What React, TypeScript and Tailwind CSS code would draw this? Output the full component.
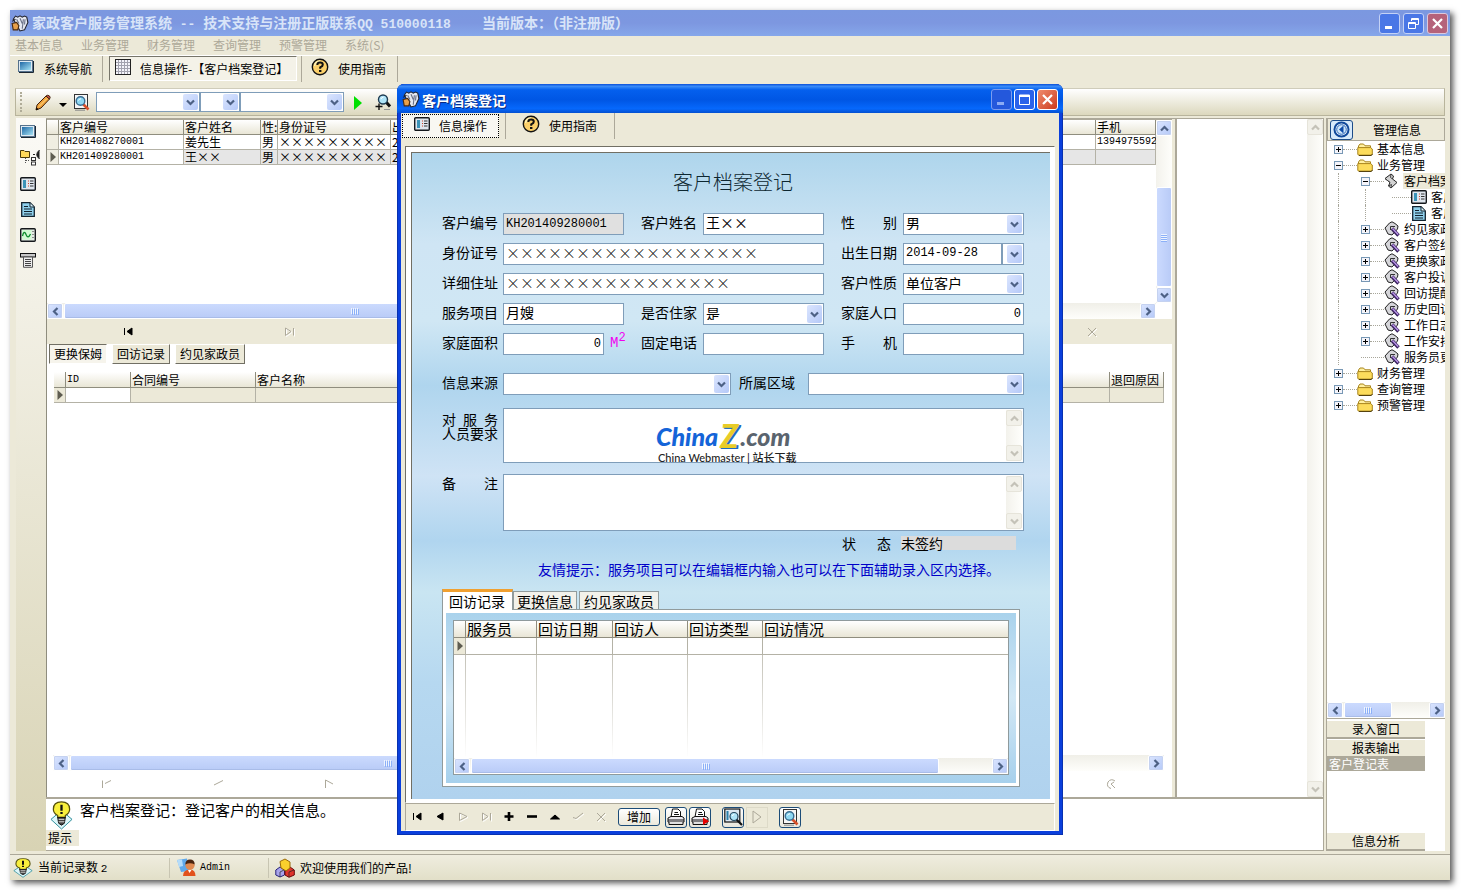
import React from 'react';

const mono = "font-['Liberation_Mono','Noto_Sans_CJK_SC',monospace]";

/* ---------- icons ---------- */

const Chevron = ({ dir, muted }: { dir: 'up' | 'down' | 'left' | 'right'; muted?: boolean }) => {
  const d = {
    up: 'M1 6.5 L4.5 3 L8 6.5',
    down: 'M1 2.5 L4.5 6 L8 2.5',
    left: 'M6.5 1 L3 4.5 L6.5 8',
    right: 'M2.5 1 L6 4.5 L2.5 8',
  }[dir];
  return (
    <svg width="9" height="9" viewBox="0 0 9 9" fill="none" stroke={muted ? '#c4c2b8' : '#4d6185'} strokeWidth="2.2">
      <path d={d} />
    </svg>
  );
};

const AppIcon = () => (
  <svg width="18" height="17" viewBox="0 0 16 16" className="shrink-0" preserveAspectRatio="none">
    <path d="M2 4 L4 1 L6 2 L8 0.8 L10 2 L12 1 L14 2 L15 7 L12 14 L8 15 L5 9 Z" fill="#e6e9f2" stroke="#23242e" />
    <path d="M5 4 L7 8 M8 3 L10 8 M11 4 L10 13 M12.5 4 L12 9" stroke="#6b7288" />
    <path d="M1 8 L5 7 L7 10 L6 14 L2 14 Z" fill="#e8a04a" stroke="#4a2a10" />
    <path d="M1 6 L4 4" stroke="#23242e" />
  </svg>
);

const ScreenIcon = () => (
  <svg width="16" height="13" viewBox="0 0 16 13" className="shrink-0">
    <defs>
      <linearGradient id="scr" x1="0" y1="0" x2="1" y2="1">
        <stop offset="0" stopColor="#2069a6" />
        <stop offset="1" stopColor="#a4e2f4" />
      </linearGradient>
    </defs>
    <rect x="0.5" y="0.5" width="14" height="11" fill="#dfeaf2" stroke="#56728c" />
    <rect x="2" y="2" width="11" height="8" fill="url(#scr)" />
    <path d="M15.5 1 V12.5 H1" stroke="#1a2632" fill="none" />
  </svg>
);

const GridIcon = () => (
  <svg width="16" height="16" viewBox="0 0 16 16" className="shrink-0">
    <rect x="0.5" y="0.5" width="15" height="15" fill="#f4f4fa" stroke="#222" />
    <path d="M3.5 1V15M6.5 1V15M9.5 1V15M12.5 1V15M1 3.5H15M1 6.5H15M1 9.5H15M1 12.5H15" stroke="#a2a2ae" />
  </svg>
);

const HelpIcon = () => (
  <svg width="18" height="18" viewBox="0 0 18 18" className="shrink-0">
    <circle cx="9" cy="9" r="7.7" fill="#fbd06a" stroke="#111" strokeWidth="1.4" />
    <path d="M3.5 8 A6 6 0 0 1 9 3" stroke="#fff3b8" strokeWidth="1.5" fill="none" />
    <path d="M6.3 7 Q6.5 4.6 9 4.6 Q11.8 4.6 11.8 6.8 Q11.8 8.2 9.2 9.4 V10.8" fill="none" stroke="#111" strokeWidth="2" />
    <rect x="8" y="12" width="2.4" height="2" fill="#111" />
  </svg>
);

const PencilIcon = () => (
  <svg width="16" height="17" viewBox="0 0 16 17" className="shrink-0">
    <path d="M1 16 L2 11 L11 2 L14.5 5 L6 14 Z" fill="#f0a23c" stroke="#40200a" />
    <path d="M11 2 Q12.5 0.5 14.5 2 Q15.8 3.5 14.5 5 Z" fill="#d8544a" stroke="#40200a" />
    <path d="M4 12.5 L12 4.5" stroke="#ffe08a" />
    <path d="M1 16 L1.6 13.5 L3.6 15.2 Z" fill="#000" />
  </svg>
);

const PreviewIcon = () => (
  <svg width="17" height="17" viewBox="0 0 17 17" className="shrink-0">
    <rect x="1.5" y="0.5" width="13" height="14" fill="#f6f6f6" stroke="#333" />
    <path d="M10 10 L15.5 15.5" stroke="#d8502a" strokeWidth="2.6" />
    <circle cx="7.5" cy="7" r="4.3" fill="#8fd8f2" stroke="#3a6e92" strokeWidth="1.4" />
    <path d="M5.5 6.5 Q6 4.8 8 4.8" stroke="#fff" fill="none" />
    <path d="M2 16.2 H12" stroke="#888" />
  </svg>
);

const SearchPlusIcon = () => (
  <svg width="16" height="17" viewBox="0 0 16 17" className="shrink-0">
    <path d="M11 8 L15 12.5" stroke="#111" strokeWidth="3" />
    <circle cx="8" cy="5.5" r="4.5" fill="#aee4f8" stroke="#1d3a50" strokeWidth="1.4" />
    <path d="M6 5 Q6.5 3.2 8.5 3.2" stroke="#fff" fill="none" />
    <path d="M0.5 12.5 H7.5 M4 9.5 V16" stroke="#111" strokeWidth="1.4" />
    <path d="M9 15.5 H15" stroke="#999" />
  </svg>
);

const TreeSideIcon = () => (
  <svg width="21" height="17" viewBox="0 0 21 17" className="shrink-0">
    <path d="M0.5 1.5 H4 L5 2.5 H9.5 V8.5 H0.5 Z" fill="#ffd95a" stroke="#4a3a08" />
    <path d="M5.5 9 V15 M6 11.5 H10" stroke="#555" strokeDasharray="1 1" />
    <rect x="11.5" y="8.5" width="4" height="3" fill="#fff" stroke="#333" />
    <rect x="11.5" y="13" width="4" height="3" fill="#fff" stroke="#333" />
    <path d="M19.5 1 Q14 5.5 19.5 10" fill="#222" stroke="#222" />
    <path d="M15 5.5 H13" stroke="#222" />
  </svg>
);

const CardIcon = () => (
  <svg width="16" height="14" viewBox="0 0 16 14" className="shrink-0">
    <rect x="0.7" y="0.7" width="14.6" height="12.6" rx="1" fill="#dfe6ee" stroke="#15181c" strokeWidth="1.4" />
    <rect x="3" y="3" width="3" height="8" fill="#3b93b8" />
    <path d="M8 4 H9 M8 6.5 H9 M8 9 H9" stroke="#d0442a" />
    <path d="M10 4 H13.5 M10 6.5 H13.5 M10 9 H13.5" stroke="#333" />
  </svg>
);

const DocIcon = () => (
  <svg width="16" height="15" viewBox="-1 0 16 15" className="shrink-0">
    <path d="M0.7 0.7 H9 L13.3 5 V14.3 H0.7 Z" fill="#8fd0ec" stroke="#12222e" strokeWidth="1.3" />
    <path d="M9 1 V5 H13" fill="#d8f2fc" stroke="#12222e" />
    <path d="M3 4.5 H7 M3 7 H11 M3 9.5 H11 M3 12 H11" stroke="#10202c" />
  </svg>
);

const WaveIcon = () => (
  <svg width="16" height="14" viewBox="0 0 16 14" className="shrink-0">
    <rect x="0.7" y="0.7" width="14.6" height="12.6" rx="1" fill="#e4ece4" stroke="#15181c" strokeWidth="1.4" />
    <rect x="2" y="2" width="9.5" height="9.5" fill="#d2fbd4" />
    <path d="M2.5 8 Q4 1.5 6 6.5 T10.5 6" stroke="#0a8a2a" fill="none" strokeWidth="1.3" />
    <path d="M13 3 V11" stroke="#333" strokeDasharray="1 2" />
  </svg>
);

const PrinterScrollIcon = () => (
  <svg width="16" height="15" viewBox="0 0 16 15" className="shrink-0">
    <rect x="0.5" y="0.5" width="15" height="3.5" fill="#c8c8c8" stroke="#111" />
    <path d="M3.5 4 H12.5 V14.3 H3.5 Z" fill="#eee" stroke="#555" />
    <path d="M5 6.5 H11 M5 8.5 H11 M5 10.5 H11 M5 12.5 H11" stroke="#444" />
  </svg>
);

const FolderIcon = () => (
  <svg width="16" height="13" viewBox="0 0 16 13" className="shrink-0">
    <path d="M1.5 11.5 V3 L3 1 H6.5 L8 2.8 H13.5 V5" fill="#fff0a0" stroke="#a8841c" />
    <path d="M0.8 11.5 V4.6 H13.6 L15.3 6 V11 L14 12.3 H2 Z" fill="#fcdc5c" stroke="#a8841c" />
    <path d="M2 12.4 H14.5 L15.5 11" stroke="#4a3a08" fill="none" />
  </svg>
);

const ScrollIcon = () => (
  <svg width="14" height="16" viewBox="0 0 14 16" className="shrink-0">
    <path d="M1 5.5 L7 1 L9.5 3 L8.5 6 L13 9.5 L7 15 L4.5 13 L6 9.5 Z" fill="#d2d2d2" stroke="#222" />
    <path d="M1 5.5 L6 9.5 M7 1 L6.5 4.5 L8.5 6 M4.5 13 L7.5 11.5 L7 15" stroke="#444" fill="none" />
  </svg>
);

const TagPenIcon = () => (
  <svg width="16" height="16" viewBox="0 0 16 16" className="shrink-0">
    <path d="M1 7 L5.5 2 L8 0.8 L11 2.5 L14 5 L13.5 8 L8 14 L4 13 Z" fill="#d6d6da" stroke="#222" />
    <path d="M6.5 5.5 H11 M6.5 5.5 V9" stroke="#333" fill="none" />
    <path d="M8 7.5 L14.5 14.5" stroke="#38205e" strokeWidth="3.4" />
    <path d="M8.5 7.5 L14.2 13.6" stroke="#b994e6" strokeWidth="1.5" />
  </svg>
);

const BulbIcon = ({ big }: { big?: boolean }) => (
  <svg width={big ? 23 : 20} height={big ? 29 : 20} viewBox="0 0 24 30" className="shrink-0" preserveAspectRatio="none">
    <path d="M1 19 L12 29 L23 19 L17 14 H7 Z" fill="#dcf6fa" stroke="#2b8b98" />
    <path d="M8 15 Q3.5 12.5 3.5 8.5 Q3.5 1 12 1 Q20.5 1 20.5 8.5 Q20.5 12.5 16 15 V17 H8 Z" fill="#f8ef3c" stroke="#55500a" strokeWidth="1.3" />
    <path d="M8 17 H16 L15 23 L12 25 L9 23 Z" fill="#444" stroke="#111" />
    <path d="M9 19 H15 M9 21.5 H15" stroke="#ddd" />
    <path d="M12 4 V10 M12 11.5 V13.5" stroke="#111" strokeWidth="2.4" />
  </svg>
);

const UserIcon = () => (
  <svg width="20" height="19" viewBox="0 0 20 19" className="shrink-0">
    <path d="M1 2 L11 0.5 L13 13 L5 14 Z" fill="#5fa8ea" />
    <path d="M1 2 L6 1.5 L7 8 L3 9 Z" fill="#b5dcfa" />
    <path d="M7 18 Q7 11.5 14 11.5 Q19.5 11.5 19.5 18 Z" fill="#e2521c" />
    <circle cx="14" cy="7.2" r="4.6" fill="#e08a52" />
    <path d="M9.3 6.5 Q9.5 1.6 14 1.6 Q18.6 1.6 18.7 6.5 Q14 4 9.3 6.5" fill="#4a2410" />
    <path d="M12 12 L13.5 15 L15.5 12 Z" fill="#fff" />
  </svg>
);

const CubesIcon = () => (
  <svg width="20" height="20" viewBox="0 0 20 20" className="shrink-0" strokeLinejoin="round">
    <path d="M0.8 12 L5 9 L9.5 12 V17 L5 19 L0.8 17 Z" fill="#a9a4ea" stroke="#28247a" />
    <path d="M10 12 L15 9 L19.3 12 V17 L14 19.3 L10 17 Z" fill="#e0352c" stroke="#6a0a0a" />
    <path d="M5 3.5 L10 1 L15 4 V10 L11 13 L6 10 Z" fill="#fbd02c" stroke="#9a6a08" />
    <path d="M5 14 V19 M5 14 L9 12 M14 14 V19 M14 14 L19 12" stroke="#222" strokeWidth="0.7" />
  </svg>
);

const PrintIcon = ({ mark }: { mark?: boolean }) => (
  <svg width="18" height="18" viewBox="0 0 18 18" className="shrink-0">
    <path d="M4 9 L5.5 1 H11 L13.5 3.5 V9" fill="#fff" stroke="#111" />
    <path d="M7.5 4.5 H11 M7 6.5 H12" stroke="#111" />
    <path d="M1 10 L4 8.5 H15 L17 10 V14 H1 Z" fill="#eceaf0" stroke="#111" />
    <path d="M1 12 H17 M2 14 V16.5 H16 V14" stroke="#111" fill="#e0e0e0" />
    {mark && <path d="M12 9.5 L18 13.2 L12 17 Z" fill="#e80000" />}
  </svg>
);

const FindIcon = () => (
  <svg width="19" height="18" viewBox="0 0 19 18" className="shrink-0">
    <rect x="0.8" y="1" width="15" height="13" fill="#dce8f2" stroke="#111" strokeWidth="1.2" />
    <rect x="2.5" y="3" width="2" height="9" fill="#2a7ea8" />
    <path d="M12.5 11.5 L18 17" stroke="#111" strokeWidth="2.2" />
    <circle cx="10" cy="8.5" r="4" fill="#aee4f8" stroke="#24465e" strokeWidth="1.2" />
    <path d="M8.3 8 Q8.6 6.6 10.2 6.5" stroke="#fff" fill="none" />
  </svg>
);

/* small database navigator glyphs */
const navGlyphs: Record<string, string> = {
  first: 'M1.5 1 V8 M9 1 L4 4.5 L9 8 Z',
  prev: 'M8 1 L2 4.5 L8 8 Z',
  plus: 'M5 0 V9 M0.5 4.5 H9.5',
  minus: 'M0 4.5 H10',
  up: 'M0.5 7 L5 3 L9.5 7 Z',
  next: 'M1.5 1 L9 4.5 L1.5 8.5 Z',
  last: 'M1.5 8.5 V1 L7 4.5 L1.5 8.5 M9.5 1 V8.5',
  check: 'M0 5.5 L3 6.5 L10 1',
  cross: 'M1 1 L9 9 M9 1 L1 9',
  corner: 'M1.5 9 V1.5 M4 4.5 L10 1.5',
  slash: 'M1 6 L10 1.5',
  flag: 'M1.5 9 V1 L9 5',
  refresh: 'M9 2 Q5 -1 2 3 Q0 8 5 9.5 M8 3 L5 5 L9 9',
};

const NavGlyph = ({ name, on }: { name: string; on?: boolean }) => (
  <svg width="11" height="10" viewBox="0 0 11 10" className="overflow-visible">
    {!on && <path d={navGlyphs[name]} fill="none" stroke="#fff" transform="translate(1 1)" />}
    <path
      d={navGlyphs[name]}
      fill={on ? '#000' : 'none'}
      stroke={on ? '#000' : '#aca899'}
      strokeWidth={on && (name === 'plus' || name === 'minus') ? 2.6 : 1}
    />
  </svg>
);

/* ---------- shared controls ---------- */

const ScrollButton = ({ dir, muted }: { dir: 'up' | 'down' | 'left' | 'right'; muted?: boolean }) => (
  <button
    aria-label={`Scroll ${dir}`}
    className={`flex h-4 w-4 shrink-0 items-center justify-center rounded-[2px] border ${
      muted ? 'border-[#e6e4da] bg-[#f2f1ea]' : 'border-white bg-gradient-to-br from-[#dbe5fe] to-[#b5c9f8] shadow-[0_0_0_1px_#c5d2f0_inset]'
    }`}
  >
    <Chevron dir={dir} muted={muted} />
  </button>
);

const HScroll = ({ thumb }: { thumb: string }) => (
  <div className="flex h-4 bg-gradient-to-b from-[#f0efe8] to-[#fefefb]">
    <ScrollButton dir="left" />
    <div className="min-w-0 flex-1 px-px">
      <div
        className={`flex h-4 items-center justify-center gap-px rounded-[2px] border border-white bg-gradient-to-b from-[#cbdafe] to-[#b9cbf7] shadow-[0_-1px_0_#a9bce8_inset] ${thumb}`}
      >
        {[0, 1, 2, 3].map((i) => (
          <span key={i} className="h-1.5 w-px bg-[#eef4fe] shadow-[1px_1px_0_#8cb0f8]" />
        ))}
      </div>
    </div>
    <ScrollButton dir="right" />
  </div>
);

const MutedVScroll = () => (
  <div className="flex w-4 shrink-0 flex-col justify-between bg-gradient-to-r from-[#f3f2ec] to-[#fefefb]">
    <ScrollButton dir="up" muted />
    <ScrollButton dir="down" muted />
  </div>
);

interface DropDownProps {
  id: string;
  value?: string;
  label?: string;
  split?: boolean;
  className?: string;
}

const DropDown = ({ id, value, label, split, className = '' }: DropDownProps) => (
  <div className={`relative ${className}`}>
    <select
      id={id}
      aria-label={label}
      defaultValue={value}
      className="block h-full w-full appearance-none border border-[#7f9db9] bg-white pb-0.5 pl-0.5 leading-none outline-none"
    >
      <option>{value || ''}</option>
    </select>
    {split && <span className="pointer-events-none absolute inset-y-0 right-[21px] w-0.5 bg-[#7f9db9]" />}
    <span className="pointer-events-none absolute inset-y-0.5 right-0.5 flex w-[15px] items-center justify-center rounded-[2px] bg-gradient-to-br from-[#dbe5fe] to-[#b5c9f8]">
      <Chevron dir="down" />
    </span>
  </div>
);

const captionBase = 'flex h-[21px] w-[21px] items-center justify-center rounded-[3px] border';

/* ---------- main window ---------- */

const menus = ['基本信息', '业务管理', '财务管理', '查询管理', '预警管理', '系统(S)'];

const TitleBar = () => (
  <div className="flex h-[26px] items-center bg-gradient-to-b from-[#7b98e0] via-[#7d97e0] to-[#86a7ea] pr-0.5 pl-px">
    <AppIcon />
    <h1 className="ml-[3px] flex-1 text-sm font-bold whitespace-pre text-[#d8e4f8]">
      家政客户服务管理系统
      <span className={`text-[13px] ${mono}`}> -- </span>
      技术支持与注册正版联系
      <span className={`text-[13px] ${mono}`}>QQ 510000118{'    '}</span>
      当前版本：（非注册版）
    </h1>
    <div className="flex gap-[3px]">
      <button aria-label="Minimize" className={`${captionBase} border-[#c4d2f6] bg-[#4a77e6]`}>
        <svg width="13" height="13"><rect x="2" y="9" width="7" height="3" fill="#fff" /></svg>
      </button>
      <button aria-label="Restore" className={`${captionBase} border-[#c4d2f6] bg-[#4a77e6]`}>
        <svg width="13" height="13" fill="none" stroke="#fff">
          <path d="M4.5 4 V1.5 H11.5 V7.5 H9 M4 2.5 H12 M1.5 5.5 H8.5 V11.5 H1.5 Z M1.5 6.5 H8.5" />
        </svg>
      </button>
      <button aria-label="Close" className={`${captionBase} border-[#dcc8dc] bg-[#b5627a]`}>
        <svg width="13" height="13" stroke="#fff" strokeWidth="2.2"><path d="M2 2 L11 11 M11 2 L2 11" /></svg>
      </button>
    </div>
  </div>
);

const MenuBar = () => (
  <nav className="flex h-5 items-center gap-[18px] border-b border-white pb-0.5 pl-[5px] text-xs text-[#aca899]">
    {menus.map((m) => (
      <button key={m}>{m}</button>
    ))}
  </nav>
);

const TabStrip = () => (
  <div className="flex h-8 items-start text-xs">
    <button className="flex h-[26px] w-[93px] items-center gap-2.5 border-r border-[#aca899] pl-2">
      <span className="mb-1.5"><ScreenIcon /></span>
      系统导航
    </button>
    <button className="ml-1.5 flex h-[25px] w-[188px] items-center gap-[9px] border border-t-[#77756a] border-r-white border-b-white border-l-[#77756a] bg-[#f4f2e8] pl-[5px] whitespace-nowrap">
      <span className="mb-1"><GridIcon /></span>
      信息操作-【客户档案登记】
    </button>
    <button className="ml-1 flex h-[26px] w-[97px] items-center gap-[9px] border-r border-l border-[#aca899] pl-[9px]">
      <span className="mb-1"><HelpIcon /></span>
      使用指南
    </button>
  </div>
);

const ToolBar = () => (
  <div className="mr-[5px] ml-[5px] flex h-7 items-center border border-[#b8b49c] border-t-[#cfccba] bg-gradient-to-b from-white to-[#dcd8bd] text-xs">
    <span className="ml-1 h-5 w-0.5 border-l-2 border-dotted border-[#b0ac98]" />
    <button aria-label="Edit" className="ml-[13px]"><PencilIcon /></button>
    <svg width="8" height="5" className="mt-1.5 ml-2"><path d="M0 0 H8 L4 4 Z" /></svg>
    <button aria-label="Preview" className="ml-1.5"><PreviewIcon /></button>
    <DropDown id="field" label="Field" className="ml-1.5 h-5 w-[104px]" />
    <DropDown id="op" label="Operator" className="h-5 w-10" />
    <DropDown id="val" label="Value" className="h-5 w-[104px]" />
    <button aria-label="Run" className="ml-2.5">
      <svg width="9" height="15" className="mt-0.5"><path d="M0 0 L8 7 L0 14 Z" fill="#00e000" /></svg>
    </button>
    <button aria-label="Find" className="ml-3"><SearchPlusIcon /></button>
  </div>
);

const SideTools = () => (
  <div className="flex w-[30px] shrink-0 flex-col items-start gap-[11px] bg-gradient-to-b from-[#fbfaf6] to-[#d8d3b4] pt-[7px] pl-1">
    <ScreenIcon />
    <TreeSideIcon />
    <CardIcon />
    <DocIcon />
    <WaveIcon />
    <PrinterScrollIcon />
  </div>
);

const headCell = 'border-r border-b border-[#8f8d7e] bg-gradient-to-b from-white to-[#e9e6d6] p-0 pl-px text-left font-normal whitespace-nowrap';
const bodyCell = 'border-r border-b border-[#b4b2a6] p-0 pl-px whitespace-nowrap';

const RowMark = () => (
  <svg width="7" height="10" className="ml-0.5"><path d="M0.5 0 L6 5 L0.5 10 Z" fill="#5e5c50" /></svg>
);

const customers = [
  { id: 'KH201408270001', name: '姜先生', phone: '1394975592', current: false },
  { id: 'KH201409280001', name: '王××', phone: '', current: true },
];

const CustomerGrid = () => (
  <div className="flex h-[184px] border-t border-[#aca899]">
    <div className="min-w-0 flex-1">
      <table className="w-full table-fixed border-separate border-spacing-0 text-xs leading-[14px]">
        <colgroup>
          <col className="w-3" />
          <col className="w-[125px]" />
          <col className="w-[77px]" />
          <col className="w-[17px]" />
          <col className="w-[113px]" />
          <col />
          <col className="w-[60px]" />
        </colgroup>
        <thead>
          <tr>
            <th className={headCell} />
            <th className={headCell}>客户编号</th>
            <th className={headCell}>客户姓名</th>
            <th className={headCell}>性:</th>
            <th className={headCell}>身份证号</th>
            <th className={headCell}>出生日期</th>
            <th className={headCell}>手机</th>
          </tr>
        </thead>
        <tbody>
          {customers.map((c) => (
            <tr key={c.id} className={c.current ? 'bg-[#e6e6e6]' : ''}>
              <td className={`${bodyCell} bg-[#f0eee2]`}>{c.current && <RowMark />}</td>
              <td className={`${bodyCell} bg-white text-[10px] ${mono}`}>{c.id}</td>
              <td className={bodyCell}>{c.name}</td>
              <td className={bodyCell}>男</td>
              <td className={bodyCell}>×××××××××</td>
              <td className={bodyCell}>2014-09-28</td>
              <td className={`${bodyCell} text-[10px] ${mono}`}>{c.phone}</td>
            </tr>
          ))}
        </tbody>
      </table>
    </div>
    <div className="flex w-4 shrink-0 flex-col bg-gradient-to-r from-[#f3f2ec] to-[#fefefb]">
      <ScrollButton dir="up" />
      <div className="flex-1" />
      <div className="flex h-[100px] flex-col items-center justify-center gap-px rounded-[2px] border border-white bg-gradient-to-r from-[#cbdafe] to-[#b9cbf7]">
        {[0, 1, 2, 3].map((i) => (
          <span key={i} className="h-px w-1.5 bg-[#eef4fe] shadow-[0_1px_0_#8cb0f8]" />
        ))}
      </div>
      <ScrollButton dir="down" />
    </div>
  </div>
);

const DetailGrid = () => (
  <table className="w-full table-fixed border-separate border-spacing-0 text-xs leading-[14px]">
    <colgroup>
      <col className="w-3" />
      <col className="w-[65px]" />
      <col className="w-[125px]" />
      <col />
      <col className="w-[54px]" />
    </colgroup>
    <thead>
      <tr className="h-4">
        <th className={headCell} />
        <th className={`${headCell} text-[10px] ${mono}`}>ID</th>
        <th className={headCell}>合同编号</th>
        <th className={headCell}>客户名称</th>
        <th className={headCell}>退回原因</th>
      </tr>
    </thead>
    <tbody>
      <tr className="h-[15px] bg-[#ece9d8]">
        <td className={bodyCell}><RowMark /></td>
        <td className={`${bodyCell} bg-white`} />
        <td className={bodyCell} />
        <td className={bodyCell} />
        <td className={bodyCell} />
      </tr>
    </tbody>
  </table>
);

const tabBtn = 'h-5 border px-1 leading-none';
const tabUp = 'border-t-white border-r-[#716f64] border-b-[#716f64] border-l-white bg-[#ece9d8]';

const WorkArea = () => (
  <div className="flex min-w-0 flex-1 flex-col border-l border-[#8f8d7e] bg-white">
    <CustomerGrid />
    <div className="mr-4">
      <HScroll thumb="w-[54%]" />
    </div>
    <div className="flex h-[25px] items-center justify-between bg-[#ece9d8] pr-[74px] pl-[76px]">
      {['first', 'last', 'next', 'plus', 'minus', 'up', 'cross'].map((g, i) => (
        <button key={g} aria-label={g}>
          <NavGlyph name={g} on={i === 0} />
        </button>
      ))}
    </div>
    <div className="flex h-5 gap-[5px] pl-0.5 text-xs">
      <button className={`${tabBtn} border-t-[#716f64] border-r-white border-b-white border-l-[#716f64] bg-[#f6f4ec]`}>更换保姆</button>
      <button className={`${tabBtn} ${tabUp}`}>回访记录</button>
      <button className={`${tabBtn} ${tabUp}`}>约见家政员</button>
    </div>
    <div className="mt-2 mr-2 ml-[7px] flex-1">
      <DetailGrid />
    </div>
    <div className="mr-2 ml-1.5">
      <HScroll thumb="w-[59%]" />
    </div>
    <div className="flex h-[26px] items-center justify-between pr-[55px] pl-[54px]">
      {['corner', 'slash', 'flag', 'last', 'plus', 'minus', 'up', 'check', 'cross', 'refresh'].map((g) => (
        <button key={g} aria-label={g}><NavGlyph name={g} /></button>
      ))}
    </div>
  </div>
);

const HintPanel = () => (
  <div className="flex h-[54px] border-t-2 border-r border-b border-[#aca899] bg-white">
    <div className="flex w-[34px] shrink-0 flex-col items-start pt-0.5">
      <span className="pl-1"><BulbIcon big /></span>
      <span className="w-[33px] bg-[#ece9d8] pl-0.5 text-xs leading-4">提示</span>
    </div>
    <p className="text-[15px] leading-[22px]">客户档案登记：登记客户的相关信息。</p>
  </div>
);

/* ---------- right panel ---------- */

type Node = { text: string; depth: number; icon: 'folder' | 'scroll' | 'tag' | 'card' | 'doc'; box?: '+' | '-' };

const nodes: Node[] = [
  { text: '基本信息', depth: 0, icon: 'folder', box: '+' },
  { text: '业务管理', depth: 0, icon: 'folder', box: '-' },
  { text: '客户档案登记', depth: 1, icon: 'scroll', box: '-' },
  { text: '客户登记', depth: 2, icon: 'card' },
  { text: '客户登记表', depth: 2, icon: 'doc' },
  { text: '约见家政员', depth: 1, icon: 'tag', box: '+' },
  { text: '客户签约', depth: 1, icon: 'tag', box: '+' },
  { text: '更换家政员', depth: 1, icon: 'tag', box: '+' },
  { text: '客户投诉', depth: 1, icon: 'tag', box: '+' },
  { text: '回访提醒', depth: 1, icon: 'tag', box: '+' },
  { text: '历史回访', depth: 1, icon: 'tag', box: '+' },
  { text: '工作日志', depth: 1, icon: 'tag', box: '+' },
  { text: '工作安排', depth: 1, icon: 'tag', box: '+' },
  { text: '服务员更换', depth: 1, icon: 'tag' },
  { text: '财务管理', depth: 0, icon: 'folder', box: '+' },
  { text: '查询管理', depth: 0, icon: 'folder', box: '+' },
  { text: '预警管理', depth: 0, icon: 'folder', box: '+' },
];

const nodeIcons = { folder: <FolderIcon />, scroll: <ScrollIcon />, tag: <TagPenIcon />, card: <CardIcon />, doc: <DocIcon /> };

const TreeRow = ({ node }: { node: Node }) => (
  <li className="flex h-4 items-center text-xs whitespace-nowrap">
    {node.depth > 0 && <span className="ml-[11px] h-4 w-4 shrink-0 border-l border-dotted border-[#a8a69a]" />}
    {node.depth > 1 && <span className="ml-[11px] h-4 w-4 shrink-0 border-l border-dotted border-[#a8a69a]" />}
    <span className={`flex h-4 w-[30px] shrink-0 items-center ${node.depth < 2 ? 'pl-[7px]' : 'pl-[11px]'}`}>
      {node.box && (
        <svg width="9" height="9" className="shrink-0">
          <rect x="0.5" y="0.5" width="8" height="8" fill="#f4f4fa" stroke="#7898b5" />
          <path d={node.box === '+' ? 'M2 4.5 H7 M4.5 2 V7' : 'M2 4.5 H7'} stroke="#000" />
        </svg>
      )}
      <span className="h-px flex-1 border-t border-dotted border-[#a8a69a]" />
    </span>
    {nodeIcons[node.icon]}
    <span className={`leading-4 ${node.icon === 'scroll' ? 'ml-[5px] bg-[#ece9d8] pl-px' : 'ml-1'}`}>{node.text}</span>
  </li>
);

const RightPanel = () => (
  <aside className="ml-0.5 flex w-[119px] shrink-0 flex-col border-l border-[#aca899] bg-white text-xs">
    <div className="flex h-[23px] items-center border border-[#aca899] bg-[#ece9d8]">
      <button aria-label="Collapse" className="ml-0.5 flex h-5 w-[23px] items-center justify-center rounded-[3px] border border-[#1c4c88] bg-[#d8eafa]">
        <svg width="17" height="17" viewBox="0 0 17 17">
          <circle cx="8.5" cy="8.5" r="7" fill="#fff" stroke="#114a9c" strokeWidth="2" />
          <circle cx="8.5" cy="8.5" r="4.8" fill="#cfe6fa" stroke="#2a68b8" />
          <path d="M10.5 4.5 L6 8.5 L10.5 12.5 Z" fill="#0c4aa8" />
        </svg>
      </button>
      <h2 className="ml-5">管理信息</h2>
    </div>
    <ul className="flex-1 overflow-hidden">
      {nodes.map((n, i) => (
        <TreeRow key={i} node={n} />
      ))}
    </ul>
    <HScroll thumb="w-[57%]" />
    <div className="mb-0.5 border-t border-[#aca899]" />
    <div className="flex h-[130px] w-[98px] flex-col">
      <button className="h-[18px] border-b-2 border-[#aca899] bg-[#ece9d8] leading-none">录入窗口</button>
      <button className="h-[17px] border-t border-white bg-[#ece9d8] leading-none">报表输出</button>
      <a href="#report" className="h-[15px] bg-[#aca899] pl-0.5 leading-[15px] text-white">客户登记表</a>
      <button className="mt-auto h-[18px] border-b-2 border-[#aca899] bg-[#ece9d8] leading-none">信息分析</button>
    </div>
  </aside>
);

const StatusBar = () => (
  <footer className="mt-[3px] flex h-[26px] items-center border-t border-[#aca899] bg-gradient-to-b from-[#efeddf] to-[#e2dfc8] text-xs">
    <div className="flex h-5 w-[160px] items-center gap-[5px] border-r border-[#c8c5b2] pl-[3px]">
      <BulbIcon />
      <span>当前记录数 <span className={`text-[11px] ${mono}`}>2</span></span>
    </div>
    <div className="flex h-5 w-[99px] items-center gap-1 border-r border-[#c8c5b2] pl-1.5">
      <UserIcon />
      <span className={`text-[10px] ${mono}`}>Admin</span>
    </div>
    <div className="flex h-5 items-center gap-[5px] pl-1.5">
      <CubesIcon />
      <span>欢迎使用我们的产品!</span>
    </div>
  </footer>
);

/* ---------- dialog ---------- */

const Label = ({ htmlFor, children, first }: { htmlFor: string; children: string; first?: boolean }) => (
  <label htmlFor={htmlFor} className={`flex h-[18px] items-center leading-none ${first ? '' : 'ml-[17px]'}`}>
    <span className="flex w-14 justify-between">
      {children.split(' ').map((part, i) => (
        <span key={i}>{part}</span>
      ))}
    </span>
  </label>
);

const box = 'block h-[22px] w-full min-w-0 border border-[#7f9db9] bg-white px-0.5 leading-none outline-none';
const cjkBox = `${box} pb-1`;

const Area = ({ id, height }: { id: string; height: string }) => (
  <div className={`flex min-w-0 flex-1 border border-[#7f9db9] bg-white p-px ${height}`}>
    <textarea id={id} className="block min-w-0 flex-1 resize-none outline-none" />
    <MutedVScroll />
  </div>
);

const VisitTabs = () => (
  <section className="mt-3 mr-1">
    <div className="flex items-end">
      <button className="relative z-10 -mb-px h-[21px] border-t-[3px] border-r border-l border-t-[#f0a030] border-r-[#919b9c] border-l-[#919b9c] bg-white pr-[7px] pl-1.5 leading-none">回访记录</button>
      <button className="h-[18px] border border-b-0 border-[#919b9c] bg-[#f2f1ea] px-[3px] leading-none">更换信息</button>
      <button className="ml-0.5 h-[18px] border border-b-0 border-[#919b9c] bg-[#f2f1ea] px-1 leading-none">约见家政员</button>
    </div>
    <div className="border border-[#919b9c] bg-white p-[3px]">
      <div className="bg-gradient-to-b from-[#a9d2ec] via-[#d2e8f5] to-[#a6d0ec] px-[7px] pt-[7px] pb-2">
        <div className="border border-[#8f9a9c] bg-white">
          <table className="w-full table-fixed border-separate border-spacing-0 text-[15px] leading-4">
            <colgroup>
              <col className="w-3" />
              <col className="w-[71px]" />
              <col className="w-[76px]" />
              <col className="w-[75px]" />
              <col className="w-[75px]" />
              <col />
            </colgroup>
            <thead>
              <tr>
                <th className={headCell} />
                {['服务员', '回访日期', '回访人', '回访类型', '回访情况'].map((h) => (
                  <th key={h} className={`${headCell} last:border-r-0`}>{h}</th>
                ))}
              </tr>
            </thead>
            <tbody>
              <tr className="h-[17px]">
                <td className={`${bodyCell} bg-[#ece9d8]`}><RowMark /></td>
                {[0, 1, 2, 3, 4].map((i) => (
                  <td key={i} className={`${bodyCell} last:border-r-0`} />
                ))}
              </tr>
              <tr className="h-[103px]">
                {[0, 1, 2, 3, 4, 5].map((i) => (
                  <td key={i} className="bg-gradient-to-b from-[#c4c2b8] to-white p-0 pr-px last:pr-0">
                    <div className="h-[103px] bg-white" />
                  </td>
                ))}
              </tr>
            </tbody>
          </table>
          <HScroll thumb="w-[90%]" />
        </div>
      </div>
    </div>
  </section>
);

const CustomerForm = () => (
  <form
    className="bg-[linear-gradient(to_bottom,#aed5ec_0%,#cfe5f4_14%,#d0e7f4_26%,#afd5ee_36%,#cfe3f5_50%,#b0d5ef_60%,#c9e5f2_68%,#b6d8f0_82%,#b0d2ee_100%)] pt-[18px] pr-[26px] pb-3 pl-[30px] text-sm"
    onSubmit={(e) => e.preventDefault()}
  >
    <h3 className="text-center text-[20px] leading-[22px] font-light text-[#0c2630]">客户档案登记</h3>
    <div className="mt-5 grid grid-cols-[61px_1fr_79px_1fr_79px_1fr] gap-y-2">
      <Label htmlFor="code" first>客户编号</Label>
      <input id="code" readOnly defaultValue="KH201409280001" className={`${box} !bg-[#e0e0e0] text-xs ${mono}`} />
      <Label htmlFor="name">客户姓名</Label>
      <input id="name" defaultValue="王××" className={cjkBox} />
      <Label htmlFor="sex">性 别</Label>
      <DropDown id="sex" value="男" className="h-[22px]" />

      <Label htmlFor="card" first>身份证号</Label>
      <input id="card" defaultValue="××××××××××××××××××" className={`${cjkBox} col-span-3 font-light`} />
      <Label htmlFor="birth">出生日期</Label>
      <DropDown id="birth" value="2014-09-28" split className={`h-[22px] text-xs ${mono}`} />

      <Label htmlFor="addr" first>详细住址</Label>
      <input id="addr" defaultValue="××××××××××××××××" className={`${cjkBox} col-span-3 font-light`} />
      <Label htmlFor="kind">客户性质</Label>
      <DropDown id="kind" value="单位客户" className="h-[22px]" />

      <Label htmlFor="service" first>服务项目</Label>
      <input id="service" defaultValue="月嫂" className={cjkBox} />
      <Label htmlFor="livein">是否住家</Label>
      <DropDown id="livein" value="是" className="h-[22px]" />
      <Label htmlFor="people">家庭人口</Label>
      <input id="people" defaultValue="0" className={`${box} text-right text-xs ${mono}`} />

      <Label htmlFor="size" first>家庭面积</Label>
      <div className="flex items-center gap-1.5">
        <input id="size" defaultValue="0" className={`${box} text-right text-xs ${mono}`} />
        <span className={`w-3.5 shrink-0 text-sm leading-none text-[#f000f0] ${mono}`}>
          M<sup className="text-xs">2</sup>
        </span>
      </div>
      <Label htmlFor="tel">固定电话</Label>
      <input id="tel" className={box} />
      <Label htmlFor="mobile">手 机</Label>
      <input id="mobile" className={box} />
    </div>

    <div className="mt-[18px] flex">
      <div className="w-[61px]"><Label htmlFor="source" first>信息来源</Label></div>
      <DropDown id="source" className="h-[22px] w-[228px]" />
      <label htmlFor="area" className="ml-2 w-[69px] leading-[18px]">所属区域</label>
      <DropDown id="area" className="h-[22px] flex-1" />
    </div>

    <div className="relative mt-[13px] flex">
      <label htmlFor="need" className="w-[61px] pt-1 leading-[14px]">
        <span className="flex w-14 justify-between"><span>对</span><span>服</span><span>务</span></span>
        人员要求
      </label>
      <Area id="need" height="h-[55px]" />
      <div className="pointer-events-none absolute top-3.5 left-[214px] font-['Lato','Noto_Sans_CJK_SC',sans-serif] whitespace-nowrap">
        <div className="flex items-end text-[25px] leading-7 font-black italic">
          <span className="text-[#1464d8]">China</span>
          <span className="px-0.5 text-[32px] text-[#e8cc28] [text-shadow:1px_1px_0_#1c6cc0,2px_1px_0_#1c6cc0]">Z</span>
          <span className="text-[#5a646e]">.com</span>
        </div>
        <div className="pl-0.5 text-[11px] leading-4 font-medium text-[#222]">China Webmaster | 站长下载</div>
      </div>
    </div>

    <div className="mt-[11px] flex">
      <div className="w-[61px]"><Label htmlFor="memo" first>备 注</Label></div>
      <Area id="memo" height="h-[57px]" />
    </div>

    <div className="mt-1 flex items-center justify-end pr-2">
      <span className="flex w-[49px] justify-between leading-4"><span>状</span><span>态</span></span>
      <output className="ml-2.5 w-[115px] bg-[#dcdcdc] leading-[14px]">未签约</output>
    </div>
    <p className="mt-2.5 pr-6 text-right leading-4 text-[#0000c8]">
      友情提示：服务项目可以在编辑框内输入也可以在下面辅助录入区内选择。
    </p>
    <VisitTabs />
  </form>
);

const navButtons: [string, boolean][] = [
  ['first', true],
  ['prev', true],
  ['next', false],
  ['last', false],
  ['plus', true],
  ['minus', true],
  ['up', true],
  ['check', false],
  ['cross', false],
];

const xpButton = 'flex h-[21px] w-[22px] items-center justify-center rounded-[3px] border border-[#1c4c78] bg-gradient-to-b from-white to-[#e8e6dc]';

const DialogNav = () => (
  <div className="mx-1 flex h-7 items-center border border-t-[#aca899] border-r-white border-b-white border-l-[#aca899] text-xs">
    {navButtons.map(([g, on]) => (
      <button key={g} aria-label={g} className="flex w-[23px] justify-center"><NavGlyph name={g} on={on} /></button>
    ))}
    <button className="ml-[5px] h-[18px] w-[42px] rounded-[3px] border border-[#1c4c78] bg-gradient-to-b from-white to-[#ece9dc] leading-none">增加</button>
    <button aria-label="Print" className={`${xpButton} ml-[5px]`}><PrintIcon /></button>
    <button aria-label="Print setup" className={`${xpButton} ml-0.5`}><PrintIcon mark /></button>
    <button aria-label="Find" className={`${xpButton} ml-[11px]`}><FindIcon /></button>
    <button aria-label="Next" className="ml-0.5 flex h-[21px] w-[22px] items-center justify-center border border-[#dddac8]">
      <svg width="10" height="14" fill="none" stroke="#aca899"><path d="M1 1 L9 7 L1 13 Z" /></svg>
    </button>
    <button aria-label="Preview" className={`${xpButton} ml-[11px]`}><PreviewIcon /></button>
  </div>
);

const Dialog = () => (
  <div
    role="dialog"
    aria-label="客户档案登记"
    className="absolute top-[84px] left-[397px] w-[666px] rounded-t-[7px] bg-[#0a3fdc] px-1 pb-1 shadow-[0_0_0_1px_#0831b0_inset]"
  >
    <div className="-mx-1 flex h-[29px] items-center rounded-t-[7px] bg-[linear-gradient(to_bottom,#0a4fd8_0%,#3a8cf8_8%,#0560ee_20%,#0056e4_55%,#0668fc_85%,#0450d0_100%)] pt-0.5 pr-[5px] pl-[5px]">
      <AppIcon />
      <h2 className="ml-0.5 flex-1 text-sm leading-none font-bold text-white [text-shadow:1px_1px_0_#0a2a80]">客户档案登记</h2>
      <div className="flex gap-0.5">
        <button aria-label="Minimize" className={`${captionBase} border-[#7c9cf0] bg-[#2458dc]`}>
          <svg width="13" height="13"><rect x="2" y="9" width="7" height="3" fill="#8cabf4" /></svg>
        </button>
        <button aria-label="Maximize" className={`${captionBase} border-white bg-[#2a62ea]`}>
          <svg width="13" height="13" fill="none" stroke="#fff"><path d="M1.5 2 H11.5 V11.5 H1.5 Z M1 2.5 H12 M1 3.5 H12" /></svg>
        </button>
        <button aria-label="Close" className={`${captionBase} border-white bg-gradient-to-br from-[#ee8a6c] to-[#cc3818]`}>
          <svg width="13" height="13" stroke="#fff" strokeWidth="2.2"><path d="M2 2 L11 11 M11 2 L2 11" /></svg>
        </button>
      </div>
    </div>
    <div className="bg-[#ece9d8]">
      <div className="flex h-[33px] items-start text-xs">
        <button className="mt-px ml-px flex h-6 w-[97px] items-center gap-[9px] border border-dotted border-black bg-[#f8f7f2] pl-[11px]">
          <span className="mb-1"><CardIcon /></span>
          信息操作
        </button>
        <button className="ml-1.5 flex h-[26px] w-[110px] items-center gap-[9px] border-r border-l border-[#aca899] pl-4">
          <span className="mb-1"><HelpIcon /></span>
          使用指南
        </button>
      </div>
      <div className="mx-1 border border-t-[#716f64] border-r-white border-b-white border-l-[#716f64] bg-white p-[5px] pr-1 pb-[3px]">
        <div className="border-t border-l border-[#716f64]">
          <CustomerForm />
        </div>
      </div>
      <DialogNav />
    </div>
  </div>
);

const App: React.FC = () => (
  <div className="relative flex min-h-screen flex-col overflow-hidden bg-white pt-2.5 pr-[11px] pb-2.5 pl-2.5 font-['Noto_Sans_CJK_SC',sans-serif] text-black">
    <div className="flex flex-1 flex-col bg-[#ece9d8] shadow-[3px_3px_6px_#555]">
      <TitleBar />
      <MenuBar />
      <TabStrip />
      <ToolBar />
      <div className="mt-0.5 flex flex-1 pr-[5px] pl-1.5">
        <SideTools />
        <div className="flex min-w-0 flex-1 flex-col">
          <div className="flex flex-1 border-t border-[#aca899]">
            <WorkArea />
            <div className="ml-[3px] flex w-[149px] shrink-0 border-r border-l-2 border-[#aca899] bg-white">
              <div className="flex-1" />
              <MutedVScroll />
            </div>
          </div>
          <HintPanel />
        </div>
        <RightPanel />
      </div>
      <StatusBar />
    </div>
    <Dialog />
  </div>
);

export default App;
